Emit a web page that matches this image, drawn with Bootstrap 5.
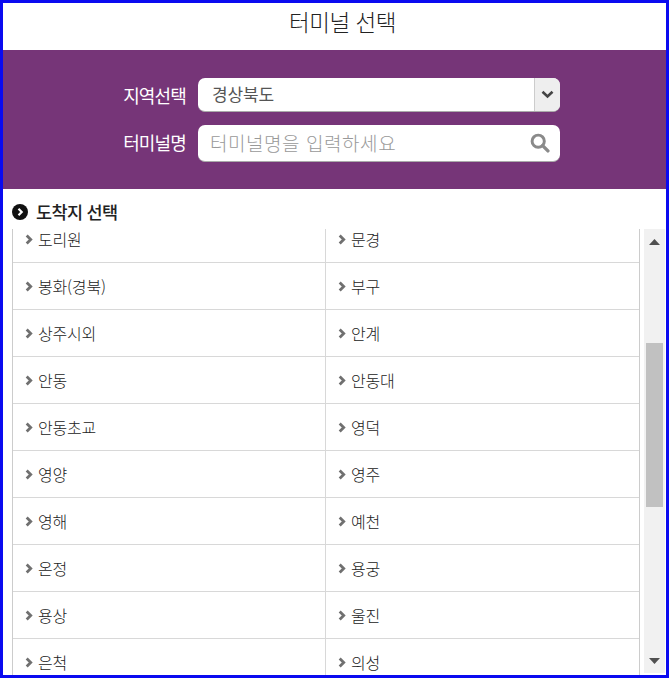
<!DOCTYPE html>
<html lang="ko"><head><meta charset="utf-8"><title>터미널 선택</title>
<link href="https://cdn.jsdelivr.net/npm/bootstrap@5.3.0/dist/css/bootstrap.min.css" rel="stylesheet">
<style>
html,body{height:100%;margin:0}
body{font-family:"Noto Sans CJK KR","Liberation Sans",sans-serif;color:#333;background:#fff;overflow:hidden}
.frame{height:678px;border:3px solid #0a0af0;display:flex;flex-direction:column}
.ttl{height:47px;font-size:22.5px;line-height:36px;text-align:center;margin:0;font-weight:300;color:#222;letter-spacing:-.5px;padding-left:16px}
.band{height:139px;background:#763578;padding:28px 0 0 0;display:flex;flex-direction:column;gap:13px}
.frow{display:flex;align-items:center;justify-content:flex-start}
.lbl{width:183px;text-align:right;color:#fff;font-size:18px;letter-spacing:-.85px;margin:0;line-height:1}
.frow+.frow .lbl{padding-bottom:3px}
.ctl{margin-left:12px;width:362px;background:#fff;border-radius:7px;border-bottom:1px solid #aaa;display:flex;align-items:stretch;overflow:hidden;font-size:17px;letter-spacing:-.15px}
.sel{height:34px}
.inp{height:37px}
.val{flex:1;padding-left:14px;line-height:32px;color:#555}
.inp .val{padding-left:12px;line-height:35px;color:#999;letter-spacing:.55px;font-size:19px;font-weight:300}
.arrow{width:26px;background:#eee;border-left:1px solid #ccc;display:flex;align-items:center;justify-content:center}
.mag{width:39px;display:flex;align-items:center;justify-content:center;padding-right:2px}
.sub{font-size:17.5px;font-weight:500;color:#222;height:40px;padding:5px 0 0 9px;display:flex;align-items:center;gap:8px;letter-spacing:-.65px;margin:0}
.sub svg{flex:none}
.listwrap{flex:1;display:flex;min-height:0;padding-left:9px;padding-right:1px;overflow:hidden}
.grid{width:628px;overflow:hidden;border-left:1px solid #ccc;border-right:1px solid #ccc;flex:none}
.trow{display:flex;height:47px;border-bottom:1px solid #d8d8d8}
.trow:first-child{height:34px}
.trow:first-child .cellx{align-items:flex-start;padding-top:2px}
.trow:first-child svg{margin-top:2.5px}
.cellx{display:flex;align-items:center;gap:4px;padding-left:12px;font-size:16px;font-weight:300;color:#222;line-height:1;letter-spacing:-.2px}
.cellx:first-child{width:312px}
.cellx+.cellx{width:314px;border-left:1px solid #d8d8d8}
.cellx svg{flex:none}
.sbar{width:21px;margin-left:4px;background:#f1f1f1;display:flex;flex-direction:column;align-items:center;flex:none;margin-bottom:2px}
.sbtn{height:26px;flex:none;display:flex;align-items:center;justify-content:center}
.sbtn:last-child{height:24px}
.thumb{width:17px;height:164px;background:#c1c1c1;margin-top:88px}
.grow{flex:1}
</style></head><body>
<svg width="0" height="0" class="d-block"><defs><path id="chev" d="M1.700 1.500 5.700 5.500 1.700 9.500" fill="none" stroke="#707070" stroke-width="2.800"/></defs></svg>
<div class="frame">
<h1 class="ttl">터미널 선택</h1>
<div class="band">
 <div class="frow"><label class="lbl">지역선택</label>
  <div class="ctl sel"><div class="val">경상북도</div><div class="arrow"><svg width="13" height="9" viewBox="0 0 13 9"><path d="M1.500 1.800 6.500 6.500l5-4.700" fill="none" stroke="#444" stroke-width="2.600"/></svg></div></div></div>
 <div class="frow"><label class="lbl">터미널명</label>
  <div class="ctl inp"><div class="val">터미널명을 입력하세요</div><div class="mag"><svg width="20" height="20" viewBox="0 0 19 19"><circle cx="7.800" cy="7.800" r="5.800" fill="none" stroke="#8a8a8a" stroke-width="2.800"/><path d="m12 12 5 5" stroke="#8a8a8a" stroke-width="3.200" stroke-linecap="round"/></svg></div></div></div>
</div>
<h2 class="sub"><svg width="16" height="16" viewBox="0 0 16 16"><circle cx="8" cy="8" r="8" fill="#111"/><path d="M6.500 4.800 9.700 8 6.500 11.200" fill="none" stroke="#fff" stroke-width="2.200"/></svg>도착지 선택</h2>
<div class="listwrap">
 <div class="grid"><div>
<div class="trow"><div class="cellx"><svg width="9" height="11" viewBox="0 0 9 11"><use href="#chev"/></svg>도리원</div><div class="cellx"><svg width="9" height="11" viewBox="0 0 9 11"><use href="#chev"/></svg>문경</div></div>
<div class="trow"><div class="cellx"><svg width="9" height="11" viewBox="0 0 9 11"><use href="#chev"/></svg>봉화(경북)</div><div class="cellx"><svg width="9" height="11" viewBox="0 0 9 11"><use href="#chev"/></svg>부구</div></div>
<div class="trow"><div class="cellx"><svg width="9" height="11" viewBox="0 0 9 11"><use href="#chev"/></svg>상주시외</div><div class="cellx"><svg width="9" height="11" viewBox="0 0 9 11"><use href="#chev"/></svg>안계</div></div>
<div class="trow"><div class="cellx"><svg width="9" height="11" viewBox="0 0 9 11"><use href="#chev"/></svg>안동</div><div class="cellx"><svg width="9" height="11" viewBox="0 0 9 11"><use href="#chev"/></svg>안동대</div></div>
<div class="trow"><div class="cellx"><svg width="9" height="11" viewBox="0 0 9 11"><use href="#chev"/></svg>안동초교</div><div class="cellx"><svg width="9" height="11" viewBox="0 0 9 11"><use href="#chev"/></svg>영덕</div></div>
<div class="trow"><div class="cellx"><svg width="9" height="11" viewBox="0 0 9 11"><use href="#chev"/></svg>영양</div><div class="cellx"><svg width="9" height="11" viewBox="0 0 9 11"><use href="#chev"/></svg>영주</div></div>
<div class="trow"><div class="cellx"><svg width="9" height="11" viewBox="0 0 9 11"><use href="#chev"/></svg>영해</div><div class="cellx"><svg width="9" height="11" viewBox="0 0 9 11"><use href="#chev"/></svg>예천</div></div>
<div class="trow"><div class="cellx"><svg width="9" height="11" viewBox="0 0 9 11"><use href="#chev"/></svg>온정</div><div class="cellx"><svg width="9" height="11" viewBox="0 0 9 11"><use href="#chev"/></svg>용궁</div></div>
<div class="trow"><div class="cellx"><svg width="9" height="11" viewBox="0 0 9 11"><use href="#chev"/></svg>용상</div><div class="cellx"><svg width="9" height="11" viewBox="0 0 9 11"><use href="#chev"/></svg>울진</div></div>
<div class="trow"><div class="cellx"><svg width="9" height="11" viewBox="0 0 9 11"><use href="#chev"/></svg>은척</div><div class="cellx"><svg width="9" height="11" viewBox="0 0 9 11"><use href="#chev"/></svg>의성</div></div>
 </div></div>
 <div class="sbar"><div class="sbtn"><svg width="11" height="6" viewBox="0 0 11 6"><path d="M5.500 0l5.500 6H0z" fill="#505050"/></svg></div><div class="thumb"></div><div class="grow"></div><div class="sbtn"><svg width="11" height="6" viewBox="0 0 11 6"><path d="M0 0h11L5.500 6z" fill="#505050"/></svg></div></div>
</div>
</div>
<script src="https://cdn.jsdelivr.net/npm/bootstrap@5.3.0/dist/js/bootstrap.bundle.min.js"></script>
</body></html>
